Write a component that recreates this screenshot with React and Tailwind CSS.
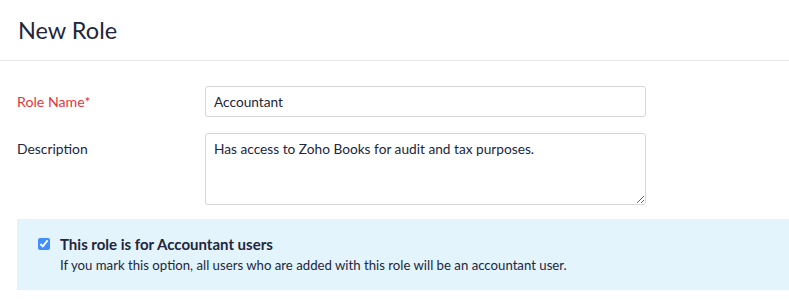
import React, { useState } from "react";

export default function App() {
  const [name, setName] = useState("Accountant");
  const [desc, setDesc] = useState("Has access to Zoho Books for audit and tax purposes.");
  const [isAccountant, setIsAccountant] = useState(true);

  return (
    <div className="w-[789px] h-[300px] bg-white overflow-hidden font-['Lato',sans-serif] text-[#21263c]">
      <div className="h-[61px] border-b border-[#e6e6e6] pl-[18px] flex items-center">
        <h1 className="text-[23.5px] font-normal text-[#21263c] leading-none pt-[1px]">New Role</h1>
      </div>

      <div className="pl-[17px] pt-[25px]">
        <div className="flex items-center">
          <label className="w-[188px] text-[14.2px] text-[#e0383e]">Role Name*</label>
          <input
            value={name}
            onChange={e => setName(e.target.value)}
            className="w-[441px] h-[31px] border border-[#d6d6d6] rounded-[3px] px-[8px] text-[13.7px] text-[#21263c] outline-none"
          />
        </div>

        <div className="flex items-start mt-[16px]">
          <label className="w-[188px] text-[13.9px] pt-[6px] text-[#21263c]">Description</label>
          <textarea
            value={desc}
            onChange={e => setDesc(e.target.value)}
            className="w-[441px] h-[72px] border border-[#d6d6d6] rounded-[3px] px-[8px] py-[5px] text-[13.7px] text-[#21263c] outline-none resize"
          />
        </div>

        <div className="mt-[14px] bg-[#e3f4fd] h-[71px] pl-[21px] pt-[15px] flex items-start gap-[10px]">
          <input
            type="checkbox"
            checked={isAccountant}
            onChange={e => setIsAccountant(e.target.checked)}
            className="mt-[4px] w-[12px] h-[12px] accent-[#408dfb]"
          />
          <div>
            <div className="text-[15px] font-bold text-[#21263c] leading-[20px]">This role is for Accountant users</div>
            <div className="text-[13.2px] text-[#21263c] mt-[2px] leading-[18px]">
              If you mark this option, all users who are added with this role will be an accountant user.
            </div>
          </div>
        </div>
      </div>
    </div>
  );
}
